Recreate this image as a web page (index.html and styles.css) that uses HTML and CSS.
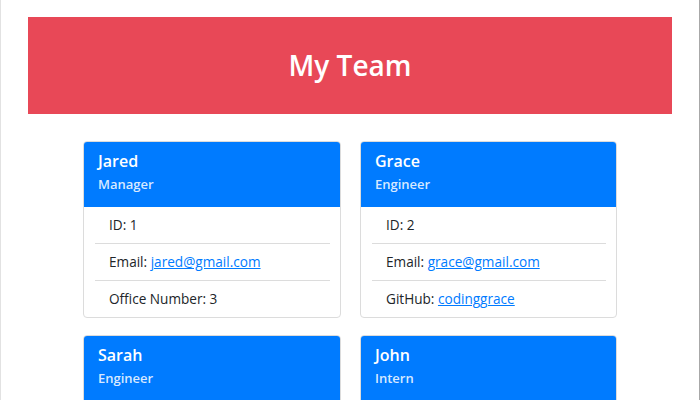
FILE: index.html
```html
<!DOCTYPE html>
<html lang="en">
<head>
<meta charset="utf-8">
<title>My Team</title>
<link rel="stylesheet" href="styles.css">
</head>
<body>
<div class="page">
  <header class="jumbo">
    <h1 class="jumbo-title">My Team</h1>
  </header>
  <main class="team">
    <div class="card">
      <div class="card-head">
        <div class="name">Jared</div>
        <div class="role">Manager</div>
      </div>
      <ul class="info">
        <li class="item">ID: 1</li>
        <li class="item">Email: <a href="#">jared@gmail.com</a></li>
        <li class="item">Office Number: 3</li>
      </ul>
    </div>
    <div class="card">
      <div class="card-head">
        <div class="name">Grace</div>
        <div class="role">Engineer</div>
      </div>
      <ul class="info">
        <li class="item">ID: 2</li>
        <li class="item">Email: <a href="#">grace@gmail.com</a></li>
        <li class="item">GitHub: <a href="#">codinggrace</a></li>
      </ul>
    </div>
    <div class="card">
      <div class="card-head">
        <div class="name">Sarah</div>
        <div class="role">Engineer</div>
      </div>
      <ul class="info">
        <li class="item">ID: 3</li>
        <li class="item">Email: <a href="#">sarah@gmail.com</a></li>
        <li class="item">GitHub: <a href="#">sarahcodes</a></li>
      </ul>
    </div>
    <div class="card">
      <div class="card-head">
        <div class="name">John</div>
        <div class="role">Intern</div>
      </div>
      <ul class="info">
        <li class="item">ID: 4</li>
        <li class="item">Email: <a href="#">john@gmail.com</a></li>
        <li class="item">School: UCLA</li>
      </ul>
    </div>
  </main>
</div>
</body>
</html>
```
FILE: styles.css
```css
html, body {
  margin: 0;
  padding: 0;
}
body {
  font-family: "Open Sans", "Noto Sans", sans-serif;
  color: #212529;
  background: #fff;
  overflow: hidden;
}
.page {
  min-height: 400px;
  box-sizing: border-box;
  border-left: 1px solid #e2e2e2;
  border-right: 1px solid #a8a8a8;
  padding: 17px 27px 0;
}
.jumbo {
  background: #e84857;
  height: 97px;
  display: flex;
  align-items: center;
  justify-content: center;
}
.jumbo-title {
  margin: 0;
  color: #fff;
  font-size: 28px;
  font-weight: 600;
  line-height: 1.2;
}
.team {
  width: 534px;
  margin: 27px auto 0;
  display: grid;
  grid-template-columns: 258px 257px;
  column-gap: 19px;
  row-gap: 17px;
}
.card {
  border: 1px solid #dcdcdc;
  border-radius: 4px;
  overflow: hidden;
  background: #fff;
}
.card-head {
  background: #007bff;
  color: #fff;
  height: 65px;
  box-sizing: border-box;
  padding: 8px 14px 0;
}
.name {
  font-size: 16px;
  font-weight: 600;
  line-height: 22px;
}
.role {
  font-size: 13px;
  font-weight: 600;
  line-height: 20px;
  margin-top: 2px;
  color: rgba(255, 255, 255, 0.85);
}
.info {
  list-style: none;
  margin: 0;
  padding: 0 10px 0 11px;
}
.item {
  font-size: 13.6px;
  line-height: 24px;
  padding: 6px 14px;
}
.item + .item {
  border-top: 1px solid #dcdcdc;
}
.item a {
  color: #007bff;
  text-decoration: underline;
}
```
